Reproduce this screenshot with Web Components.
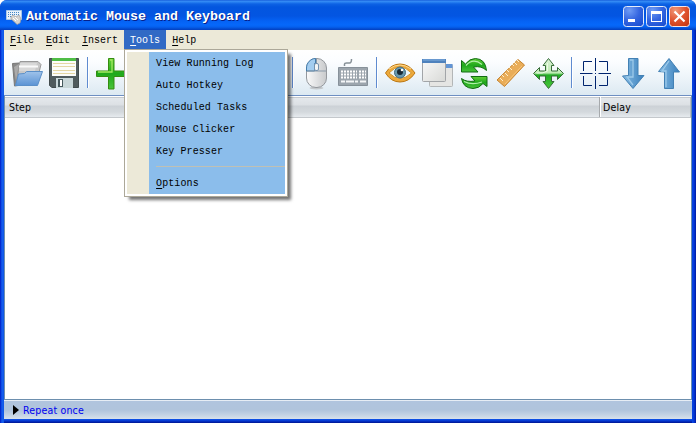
<!DOCTYPE html>
<html lang="en"><head><meta charset="utf-8"><title>Automatic Mouse and Keyboard</title>
<style>html,body{margin:0;width:696px;height:423px;overflow:hidden;background:#fff}</style></head>
<body>
<app-window>
  <title-bar slot="title">Automatic Mouse and Keyboard</title-bar>
  <menu-bar slot="menu">
    <menu-item key="F">ile</menu-item><menu-item key="E">dit</menu-item><menu-item key="I">nsert</menu-item>
    <menu-item key="T" active>ools
      <menu-popup slot="popup">
        <menu-entry>View Running Log</menu-entry><menu-entry>Auto Hotkey</menu-entry><menu-entry>Scheduled Tasks</menu-entry><menu-entry>Mouse Clicker</menu-entry><menu-entry>Key Presser</menu-entry>
        <menu-line></menu-line>
        <menu-entry key="O">ptions</menu-entry>
      </menu-popup>
    </menu-item>
    <menu-item key="H">elp</menu-item>
  </menu-bar>
  <tool-bar slot="tools">
    <tool-icon name="folder"></tool-icon><tool-icon name="save"></tool-icon><tool-line></tool-line><tool-icon name="add"></tool-icon>
    <tool-gap></tool-gap>
    <tool-line></tool-line><tool-icon name="mouse"></tool-icon><tool-icon name="keyboard"></tool-icon><tool-line wide="before"></tool-line>
    <tool-icon name="eye"></tool-icon><tool-icon name="windows"></tool-icon><tool-icon name="refresh"></tool-icon><tool-icon name="ruler"></tool-icon><tool-icon name="move"></tool-icon><tool-line wide="after"></tool-line>
    <tool-icon name="target"></tool-icon><tool-icon name="down"></tool-icon><tool-icon name="up"></tool-icon>
  </tool-bar>
  <step-list></step-list>
  <status-bar slot="status">Repeat once</status-bar>
</app-window>
<script>
const make=(name,html)=>customElements.define(name,class extends HTMLElement{
  constructor(){super();const t=document.createElement('template');t.innerHTML=typeof html==='function'?html(this):html;this.attachShadow({mode:'open'}).append(t.content.cloneNode(true));}
});
const mono='font-family:"Liberation Mono",monospace;font-size:10px;';
const ui='font-family:"DejaVu Sans Condensed","DejaVu Sans",sans-serif;font-stretch:condensed;font-size:10.5px;';

make('app-window',`<style>
:host{display:flex;flex-direction:column;box-sizing:border-box;width:696px;height:423px;border-radius:7px 7px 0 0;overflow:hidden;
background:linear-gradient(90deg,#001cc0 0,#0839dd 1px,#1660ee 2px,#0f55e6 4px,transparent 4px,transparent 692px,#0a45e0 692px,#0338d8 694px,#0018a0 696px),linear-gradient(#0f55e6 419px,#0a48e0 420px,#0333cc 421px,#001590 423px)}
.body{display:flex;flex-direction:column;flex:1;min-height:0;margin:0 4px 4px}
</style><slot name="title"></slot><div class="body"><slot name="menu"></slot><slot name="tools"></slot><slot></slot><slot name="status"></slot></div>`);

make('title-bar',`<style>
:host{display:flex;align-items:center;box-sizing:border-box;flex:none;height:30px;padding:3px 6px 0 6px;
background:linear-gradient(#0a4fd4 0,#3a8ff5 1px,#2a83f2 2px,#0d62e4 4px,#0356df 7px,#0355e2 16px,#0562f4 21px,#0668fa 25px,#0560ee 27px,#0349cc 29px,#033ec0 30px)}
.t{flex:1;margin-left:4px;padding-top:1px;font:bold 13.33px/18px "Liberation Mono",monospace;color:#fff;text-shadow:1px 1px #06208a;white-space:pre}
.b{display:flex;gap:2px}.b svg{display:block}
</style>
<svg width="16" height="16" viewBox="0 0 16 16"><path d="M.5 1.500h15v9H.5z" fill="#e9f2fb" stroke="#a9c9e7"/><path d="M2 3.500h12M2 5.500h12M2 7.500h7" stroke="#4386c4" stroke-dasharray="1 1"/><path d="M5 8l2-2 3 2 3-2 2 4-1 4-3 1.500-3-3-3-2.500z" fill="#d6d4d0" stroke="#a29e9b" stroke-width=".7"/><path d="M9 8l3 3M7 9l3 3" stroke="#fff"/></svg>
<div class="t"><slot></slot></div>
<div class="b">
<svg width="21" height="21"><defs><radialGradient id="g" cx=".3" cy=".2" r="1"><stop stop-color="#6f9cf5"/><stop offset=".5" stop-color="#3465e0"/><stop offset="1" stop-color="#174bd0"/></radialGradient></defs><rect x=".5" y=".5" width="20" height="20" rx="3" fill="url(#g)" stroke="#e4ecfa"/><path d="M5 13h7v3H5z" fill="#fff"/></svg>
<svg width="21" height="21"><rect x=".5" y=".5" width="20" height="20" rx="3" fill="url(#g)" stroke="#e4ecfa"/><path d="M5 5h11v11H5zM6 8v7h9V8z" fill="#fff" fill-rule="evenodd"/></svg>
<svg width="21" height="21"><defs><radialGradient id="r" cx=".3" cy=".2" r="1"><stop stop-color="#f09878"/><stop offset=".5" stop-color="#e05430"/><stop offset="1" stop-color="#c4350f"/></radialGradient></defs><rect x=".5" y=".5" width="20" height="20" rx="3" fill="url(#r)" stroke="#f4e4e6"/><path d="M5.500 5.500l10 10m0-10l-10 10" stroke="#fff" stroke-width="2.200"/></svg>
</div>`);

make('menu-bar',`<style>:host{display:flex;flex:none;height:20px;background:#ece9d8}</style><slot></slot>`);
make('menu-item',e=>`<style>:host{display:block;position:relative;${mono}line-height:22px;height:19px;padding:0 6px;color:#000;white-space:nowrap}
:host([active]){background:#316ac5;color:#fff;z-index:5}u{text-underline-offset:2px}
</style><u>${e.getAttribute('key')}</u><slot></slot><slot name="popup"></slot>`);
make('menu-popup',`<style>:host{position:absolute;left:0;top:19px;display:block;box-sizing:border-box;width:164px;height:148px;border:1px solid #aca899;background:linear-gradient(90deg,#ece9d8 22px,#8bbdeb 22px) 2px 2px/158px 142px no-repeat #fff;padding:2px;box-shadow:4px 4px 3px -1px rgba(0,0,0,.55);color:#000;white-space:nowrap;letter-spacing:.09px}</style><slot></slot>`);
make('menu-entry',e=>`<style>:host{display:block;height:22px;line-height:24px;padding-left:29px;white-space:pre}u{text-underline-offset:2px}</style>${e.hasAttribute('key')?`<u>${e.getAttribute('key')}</u>`:''}<slot></slot>`);
make('menu-line',`<style>:host{display:block;height:10px;padding-left:29px}i{display:block;height:4px;border-bottom:1px solid #c0c0b4}</style><i></i>`);

make('tool-bar',`<style>:host{display:flex;flex:none;box-sizing:border-box;height:46px;padding:0 0 0 5px;border-bottom:1px solid #6e8fc2;background:linear-gradient(#fff 0,#fbfdff 12px,#edf4f9 28px,#dce9f2 45px);overflow:hidden}</style><slot></slot>`);
make('tool-line',`<style>:host{flex:none;display:block;width:9px;padding-top:7px}:host([wide]){width:10px}i{display:block;width:1px;height:31px;margin-left:4px;background:#5f8bd0;box-shadow:1px 0 #fff}:host([wide=before]) i{margin-left:5px}</style><i></i>`);
make('tool-gap',`<style>:host{display:block;flex:none;width:159px}</style>`);

const icons={
folder:[9,`<path d="M12.500 63.500l7-.5 2 2h18l-3 18-22 3z" fill="#888" stroke="#777"/><path d="M20 61.500h18l3 3-3 12-21 3z" fill="#c8c8c8" stroke="#999"/><path d="M14 67l5-3-3 17z" fill="#aaa"/><path d="M20 63h17l-2 8H19z" fill="#d8d8d8"/><path d="M19 66.500h19" stroke="#fafafa" stroke-width="2"/><path d="M18.500 74l6-.5 2-2h16l-5 14H15.500z" fill="url(#b)" stroke="#5a8fc8"/>`],
save:[46,`<path d="M49.500 58.500h29v29H52l-2.500-2z" fill="#505b5d" stroke="#414b4d"/><path d="M52 58h24v18H52z" fill="#fbfcf9"/><path d="M52 58h24v3H52z" fill="#4fbd46"/><path d="M53 63.500h22m-22 3h22m-22 4h22m-22 3h22" stroke="#e5d7a4"/><path d="M56 78h17v10H56z" fill="#c9d7d9"/><path d="M58 79h5v8h-5z" fill="#46585c"/><path d="M60 80h2v6h-2z" fill="#fff"/>`],
add:[92,`<path d="M108.500 58.500h5.500v12.500h12.500v5.500H114V89h-5.500V76.500H96.500V71h12z" fill="url(#g)" stroke="#358d10"/><path d="M110 60h2v12H98" fill="none" stroke="#a4e963" stroke-width="1.300"/>`],
mouse:[297,`<ellipse cx="316.500" cy="88" rx="7" ry="1.500" fill="#c4c8cb"/><rect x="306.500" y="58.500" width="20" height="29" rx="9.500" fill="url(#s)" stroke="#94989d"/><path d="M306.500 71v-3c0-5 4-9.500 9-9.500v5h-1v7.500z" fill="#a3cdf0" stroke="#437dad"/><path d="M307 71h19M316.500 59v12" stroke="#8999a8"/><rect x="314.500" y="63.500" width="4" height="7" rx="1.500" fill="#f3f5f6" stroke="#7592ae"/>`],
keyboard:[334,`<path d="M344.500 66v-2q0-1 2-1h3q2 0 2-4" fill="none" stroke="#879198" stroke-width="1.500"/><path d="M338.500 67.500h29v18h-29z" fill="#9ca5ad" stroke="#87919a"/><path d="M341 71.500h16m2 0h7m-25 3h16m2 0h7m-25 3h16m2 0h7" stroke="#fff" stroke-width="2" stroke-dasharray="2 1"/><path d="M341 81.500h4m1 0h8m1 0h3m2 0h6" stroke="#f4f6f7" stroke-width="2"/>`],
eye:[381,`<path d="M385.500 73Q391 64 400 64t15 9Q409 82 400 82t-14.500-9z" fill="#eda93b" stroke="#bc7712"/><path d="M389 73q11-12 22.500 0-11.500 11-22.500 0z" fill="#eef8fa" stroke="#d39225"/><circle cx="400" cy="72.500" r="5.500" fill="#6899ad" stroke="#466c81"/><circle cx="400" cy="72" r="3" fill="#172935"/><circle cx="402" cy="70" r="1.300" fill="#fff"/><path d="M389 69q11-8 22 0" fill="none" stroke="#ffd98e"/>`],
windows:[418,`<rect x="429.500" y="64.500" width="23" height="22" rx="1" fill="#e5e5e3" stroke="#b3b6b7"/><path d="M430 64h22.500v4H430z" fill="#6295d5"/><rect x="422.500" y="59.500" width="23" height="22" rx="1" fill="url(#w)" stroke="#a2a5a8"/><path d="M422 59h24v4h-24z" fill="#4f82bd"/><path d="M423 60h22" stroke="#82afe0"/>`],
refresh:[455,`<path d="M461.500 60.500l4 3.500q4-5.500 10-5.500 10 .5 11 12-5-5-13-3.500l4.500 5h-16.500z" fill="url(#g)" stroke="#116b12"/><path d="M487 86.500l-4-3q-4 5-10 5-10-.5-11.500-10 5 4 13.500 2.500l-4-4.500h16z" fill="url(#g)" stroke="#116b12"/><path d="M466 65.500q7-8 16-1M464 81.500q8 4 18 .5" fill="none" stroke="#b2efaa" stroke-width="1.200"/>`],
ruler:[492,`<path d="M518 59.500l6.500 5.500-20 21.500-7.500-6.500z" fill="#e9ad59" stroke="#c6842f"/><path d="M500 78l3 3m-1-6l2 2m1-4l3 3m-1-6l2 2m0-5l3 3m0-6l2 2m0-4l3 3m0-5l2 2" stroke="#fff0cc"/><path d="M505 84l17-18" stroke="#f9c67b"/>`],
move:[530,`<path d="M548.500 58.500l5.500 7h-2.500v5.500h6v-3.500l6 6-6 6v-3.500h-6v5.500h2.500l-5.500 7-5.500-7h2.500v-5.500h-6v3.500l-6-6 6-6v3.500h6v-5.500H543z" fill="url(#m)" stroke="#376c38"/><path d="M547.500 63v8q-5 3-11 2" fill="none" stroke="#eafbe4"/>`],
target:[577,`<path d="M592 61.500h-8.500V71M599 61.500h8.500V71M592 85.500h-8.500V76M599 85.500h8.500V76" fill="none" stroke="#00246e"/><path d="M595.500 58v13m0 5v13M580 73.500h12.500m6 0H611" stroke="#00246e"/><path d="M595 73h1v1h-1z" fill="#00246e"/>`],
down:[614,`<path d="M628.500 58.500h9.500v17h6L633 88.500 622.500 76l6-.5z" fill="url(#a)" stroke="#4381b4"/><path d="M630 60h3v17h-6l6 8" fill="none" stroke="#9dcaea" stroke-width="1.300"/>`],
up:[651,`<path d="M664.500 88.500h9V72h6L669 58.500 658.500 71.500l6 .5z" fill="url(#a)" stroke="#4381b4"/><path d="M666 87V71h-4l7-10" fill="none" stroke="#9dcaea" stroke-width="1.300"/>`]};
make('tool-icon',e=>{const n=e.getAttribute('name'),[x,p]=icons[n];
return `<style>:host{display:block;flex:none;width:${n==='ruler'?38:37}px;height:45px}svg{display:block}</style><svg width="37" height="45" viewBox="${x} 50 37 45"><defs>
<linearGradient id="b" x2="0" y2="1"><stop stop-color="#9fc3ea"/><stop offset="1" stop-color="#5b93d4"/></linearGradient>
<linearGradient id="g" x2="0" y2="1"><stop stop-color="#62cf36"/><stop offset=".5" stop-color="#1fa81c"/><stop offset="1" stop-color="#4ac43a"/></linearGradient>
<linearGradient id="s"><stop stop-color="#fafafa"/><stop offset="1" stop-color="#c8cacc"/></linearGradient>
<linearGradient id="w" x2="1" y2="1"><stop stop-color="#fafafa"/><stop offset="1" stop-color="#d8d9d6"/></linearGradient>
<linearGradient id="m" x2="0" y2="1"><stop stop-color="#d9f0d5"/><stop offset=".48" stop-color="#c0ecb5"/><stop offset=".55" stop-color="#20ac24"/><stop offset="1" stop-color="#48c83a"/></linearGradient>
<linearGradient id="a"><stop stop-color="#87bce3"/><stop offset="1" stop-color="#3a80bd"/></linearGradient></defs>${p}</svg>`});

make('step-list',`<style>:host{display:flex;flex-direction:column;flex:1;min-height:0;box-sizing:border-box;background:#fff;border-left:1px solid #6d8fae;border-right:1px solid #6d8fae;border-bottom:1px solid #6d8fae}
.h{display:flex;box-sizing:border-box;height:22px;border-top:1px solid #fff;border-bottom:1px solid #c4c8cc;background:linear-gradient(#c4c9ce 0,#c4c9ce 1px,#e4e8ec 1px,#dce0e4 8px,#ccd1d6 9px,#d4d9dd 15px,#e6eaee 20px);${ui}letter-spacing:.18px;line-height:20px;color:#000}
.s{box-sizing:border-box;width:595px;padding-left:4px;border-right:1px solid #a6a9ac}.d{flex:1;padding-left:3px;box-shadow:inset 1px 0 #fff;border-right:1px solid #b9bcc0}
</style><div class="h"><div class="s">Step</div><div class="d">Delay</div></div>`);
make('status-bar',`<style>:host{display:flex;align-items:center;flex:none;box-sizing:border-box;height:19px;border-top:1px solid #e6edf5;background:linear-gradient(#b0c4de,#b0c4dc 9px,#c4d3e4 14px,#d8e1eb 18px);padding:0 0 1px 9px;${ui}letter-spacing:.18px;line-height:16px;color:#0000f0}svg{margin-right:4px}</style><svg width="6" height="10"><path d="M0 0l6 5-6 5z" fill="#000"/></svg><slot></slot>`);
</script></body></html>
